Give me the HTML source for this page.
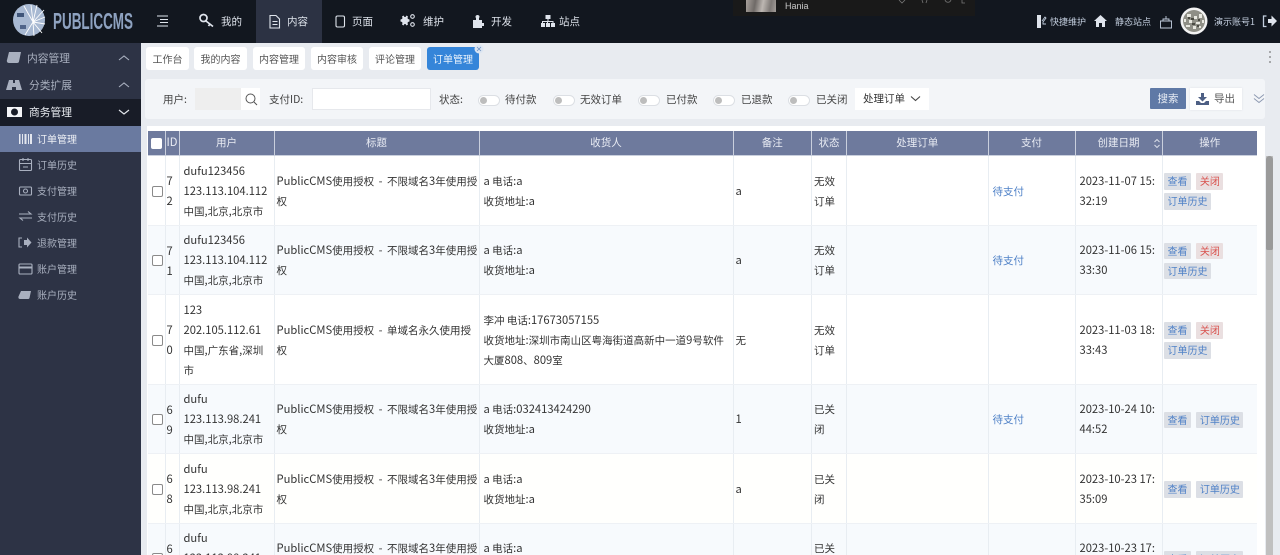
<!DOCTYPE html>
<html lang="zh"><head><meta charset="utf-8"><title>PublicCMS</title>
<style>
*{box-sizing:border-box}
html,body{margin:0;padding:0;width:1280px;height:555px;overflow:hidden;background:#e8ebf0}
body{position:relative;font-family:"Liberation Sans","Noto Sans CJK SC",sans-serif;font-size:10.5px;color:#333}
.t,.a{position:absolute;white-space:nowrap}
.t{line-height:20px;font-family:"Noto Sans CJK SC","Liberation Sans",sans-serif}
svg{position:absolute;overflow:visible}
#top{position:absolute;left:0;top:0;width:1280px;height:43px;background:#12171f}
#side{position:absolute;left:0;top:43px;width:141px;height:512px;background:#2d3345}
.nv{color:#dde2ea;font-size:10.5px}
.rt{color:#c3cede;font-size:9px}
.sd{color:#a9b0bf;font-size:10px}
.sh{color:#a9b0bf;font-size:10.75px}
.tab{position:absolute;top:47px;height:23px;line-height:23px;background:#fff;border-radius:3px;text-align:center;color:#555;font-size:10px;font-family:"Noto Sans CJK SC",sans-serif}
.lb{font-size:10.5px;color:#444}
.tg{position:absolute;top:95px;width:22px;height:11px;background:#fff;border:1px solid #dcdfe4;border-radius:6px}
.tg:before{content:"";position:absolute;left:1px;top:1px;width:7px;height:7px;border-radius:50%;background:#bdbdbd}
#wrap{position:absolute;left:148px;top:131px;width:1109px;height:424px;overflow:hidden}
table{position:absolute;left:0;top:0;width:1109px;border-collapse:collapse;table-layout:fixed;font-family:"Noto Sans CJK SC","Liberation Sans",sans-serif;font-size:10.5px;color:#333;line-height:20px}
th{height:24.5px;background:#6e7a9d;color:#e8ebf3;font-weight:400;padding:0;border-right:1px solid #c9cfdd;border-bottom:1px solid #c9cfdd;line-height:24px;overflow:hidden}
th:last-child,td:last-child{border-right:0}
td{padding:3px 4px 0;border-right:1px solid #e8edf2;border-bottom:1px solid #eef1f5;overflow:hidden;vertical-align:middle;word-break:break-all;background:#fff}
tr.o td{background:#f7fafd}
tr.w td{background:#fffffd}
i{font-style:normal;font-size:11.2px;line-height:1}
i.h{margin:0 4.5px}
.cb{display:block;width:11px;height:11px;border:1px solid #8a8a8a;border-radius:2px;background:#fff;margin:0 auto}
.b{display:inline-block;height:16.5px;line-height:16px;padding:0 3.5px;background:#dcdfe5;color:#4f81c7;border-radius:1px;font-size:10px;margin:1.75px 3px 1.75px 0;vertical-align:middle}
.r{color:#d9534f;background:#eadfe0}
.p{color:#4f81c7}
td.op{padding:2px 0 0 1.5px;line-height:20px}
td.c{padding:2px 0 0 1.500px}
td.n{padding:4px 0 0 1px}
</style></head>
<body>
<div id="top"></div>
<div class="a" style="left:256px;top:0;width:66px;height:43px;background:#2c3243"></div>
<div class="a" style="left:733px;top:0;width:242px;height:16px;background:#191919"></div>
<div class="a" style="left:746px;top:0;width:30px;height:12px;background:linear-gradient(100deg,#a8a19c,#6f6a67 30%,#bdb7b2 55%,#7d7875 80%,#a39d99)"></div>
<div class="t" style="left:785px;top:-4px;color:#c9c9c9;font-size:9px;font-family:'Liberation Sans',sans-serif">Hania</div>
<svg style="left:0;top:0" width="1280" height="43" fill="none">
 <circle cx="29" cy="20" r="16" fill="#a8b9d2"/>
 <g stroke="#fff" stroke-width=".9">
  <path d="M33 22L44 10M33 22L45 17M33 22L45 24M33 22L42 33M33 22L34 36M33 22L25 35M33 22L31 5M33 22L37 5M33 22L24 6"/>
 </g>
 <rect x="17" y="13" width="7" height="4" fill="#3f5579"/><rect x="20" y="25" width="6" height="4" fill="#4f6489"/>
 <g stroke="#dfe4ec" stroke-width="1.1">
  <path d="M157 16h11M160 19.500h8M160 22.500h8M157 26h11"/>
  <path d="M270 15.500h6l3.500 3.500v9h-9.500zM272.500 21.500h5M272.500 24.500h5"/>
  <rect x="336" y="16" width="8.500" height="11" rx="1.500"/>
  <circle cx="412.500" cy="16.500" r="1.800"/><circle cx="412.500" cy="24.500" r="1.800"/>
 </g>
 <g stroke="#dfe4ec" stroke-width="1.700">
  <circle cx="203.500" cy="18" r="3.500"/><path d="M206 21l7 5.500M210 24l-1.500 2"/>
 </g>
 <g fill="#dfe4ec">
  <path d="M405 17l1.500-1 1 1.500h1l1-1.500 1.500 1-.5 1.500.5 1 1.500.5v2l-1.500.5-.5 1 .5 1.500-1.500 1-1-1.500h-1l-1 1.500-1.500-1 .5-1.500-.5-1-1.500-.5v-2l1.500-.5.5-1z" transform="translate(-3 -.5)"/>
  <path d="M473 20h3v-2c-1-1-.5-3 1.500-3s2.500 2 1.500 3v2h3v3h2v3h-2v2h-9z"/>
  <rect x="545.500" y="15" width="5" height="4"/><rect x="541" y="23" width="4" height="4"/><rect x="546" y="23" width="4" height="4"/><rect x="551" y="23" width="4" height="4"/>
  <path d="M547.500 19h1v2h5v2h-1v-1h-4.500v1h-1v-1H543v1h-1v-2h5.500z"/>
  <path d="M1037 15h4v13h-4z"/>
  <path d="M1094 21l6.500-6 6.500 6h-2v6h-3v-4h-3v4h-3v-6z"/>
  <path d="M1268 18h3.500v-3.500l5.500 5.500-5.500 5.500V22h-3.500z" transform="translate(0 1)"/>
 </g>
 <g stroke="#c3cede" stroke-width=".9">
  <path d="M1042 21l3-4 1 1-3 4v2h3"/>
  <path d="M1160.500 21h11v7h-11zM1163 21v-2h6v2M1166 16v3"/>
  <path d="M1266.500 16h-3v10.500h3" stroke-width="1.300"/>
 </g>
 <circle cx="1194" cy="21" r="13.500" fill="#f3f3f3"/>
 <circle cx="1194" cy="21" r="11" fill="#8f8f86"/>
 <g fill="#e8e8e0"><rect x="1187" y="14" width="4" height="3"/><rect x="1194" y="16" width="3" height="3"/><rect x="1199" y="14" width="3" height="4"/><rect x="1189" y="20" width="3" height="3"/><rect x="1196" y="22" width="4" height="2"/><rect x="1186" y="25" width="4" height="2"/><rect x="1193" y="26" width="3" height="3"/><rect x="1199" y="26" width="2" height="2"/><rect x="1184" y="19" width="2" height="3"/><rect x="1202" y="20" width="2" height="3"/></g>
 <g fill="#4a4a42"><rect x="1191" y="18" width="3" height="2"/><rect x="1198" y="19" width="2" height="2"/><rect x="1192" y="23" width="3" height="2"/><rect x="1188" y="17" width="2" height="2"/><rect x="1197" y="25" width="2" height="2"/></g>
 <g stroke="#777" stroke-width=".8"><path d="M899 0l3 3 3-3M922 0l1 3M927 0l-1 3M945 0c1 3 5 3 6 0M962 0v3h3"/></g>
</svg>
<svg style="left:0;top:0" width="140" height="43"><text x="53" y="29" textLength="80" lengthAdjust="spacingAndGlyphs" fill="#8ea2c0" font-family="'Liberation Sans',sans-serif" font-weight="700" font-size="23">PUBLICCMS</text></svg>
<div class="t nv" style="left:221px;top:12px">我的</div>
<div class="t nv" style="left:287px;top:12px">内容</div>
<div class="t nv" style="left:352px;top:12px">页面</div>
<div class="t nv" style="left:423px;top:12px">维护</div>
<div class="t nv" style="left:491px;top:12px">开发</div>
<div class="t nv" style="left:559px;top:12px">站点</div>
<div class="t rt" style="left:1050px;top:12px">快捷维护</div>
<div class="t rt" style="left:1115px;top:12px">静态站点</div>
<div class="t rt" style="left:1214px;top:12px">演示账号1</div>

<div id="side"></div>
<div class="a" style="left:0;top:99px;width:141px;height:27px;background:#181c27"></div>
<div class="a" style="left:0;top:126px;width:141px;height:26px;background:#6a7aa0"></div>
<svg style="left:0;top:43px" width="141" height="270" fill="none">
 <g fill="#a9b0bf">
  <path d="M9 9h12l-2 9.500c0 1-1 1.500-2 1.500H9c-2 0-2.500-2-2-3z"/>
  <path d="M9 37h4v3h2v-3h4l3 10h-6v-3h-4v3H6z"/>
 </g>
 <g stroke="#a9b0bf" stroke-width="1.100">
  <path d="M119 17l5-4 5 4M119 44l5-4 5 4"/>
  <rect x="19.500" y="116.500" width="12" height="11" rx="1"/>
  <path d="M19.500 120.500h12M23 115v3M28 115v3M23 124h5"/>
  <rect x="19.500" y="144" width="12" height="8" rx="1"/><circle cx="25.500" cy="148" r="2"/>
  <path d="M19 171h12l-3-2.500M32 175H20l3 2.500" />
  <path d="M22 195h-3v9h3"/>
  <rect x="19" y="221" width="13" height="10" rx="1"/><path d="M19 224.500h13" stroke-width="2"/>
 </g>
 <path d="M119 67l5 4 5-4" stroke="#e3e6ec" stroke-width="1.200"/>
 <rect x="7" y="64" width="15" height="10" fill="#f4f5f7"/><circle cx="14.500" cy="69" r="3.500" fill="#181c27"/>
 <path d="M19 91h1.500v10H19zM22 91h1v10h-1zM24.500 91h2v10h-2zM28 91h1v10h-1zM30 91h2v10h-2z" fill="#e3e6ee"/>
 <path d="M24 197h3v-2.500l4.500 5-4.500 5V202h-3z" fill="#a9b0bf"/>
 <path d="M21 248h10l-1.500 7c-.2.800-.8 1-1.500 1h-8c-1.500 0-1.800-1.500-1.500-2.500z" fill="#a9b0bf"/>
</svg>
<div class="t sh" style="left:27px;top:49px">内容管理</div>
<div class="t sh" style="left:29px;top:76px">分类扩展</div>
<div class="t sh" style="left:29px;top:103px;color:#e8ebf0">商务管理</div>
<div class="t" style="left:37px;top:129px;color:#eef0f5;font-size:10px">订单管理</div>
<div class="t sd" style="left:37px;top:155px">订单历史</div>
<div class="t sd" style="left:37px;top:181px">支付管理</div>
<div class="t sd" style="left:37px;top:207px">支付历史</div>
<div class="t sd" style="left:37px;top:233px">退款管理</div>
<div class="t sd" style="left:37px;top:259px">账户管理</div>
<div class="t sd" style="left:37px;top:285px">账户历史</div>

<div class="tab" style="left:146px;width:43px">工作台</div>
<div class="tab" style="left:194px;width:53px">我的内容</div>
<div class="tab" style="left:253px;width:52px">内容管理</div>
<div class="tab" style="left:311px;width:52px">内容审核</div>
<div class="tab" style="left:369px;width:52px">评论管理</div>
<div class="tab" style="left:427px;width:52px;background:#3585d9;color:#eaf3fc">订单管理</div>
<svg style="left:474px;top:44px" width="10" height="10"><circle cx="5" cy="5" r="4.500" fill="#dbe5f2"/><path d="M3 3l4 4M7 3l-4 4" stroke="#6d8fbe" stroke-width=".8"/></svg>
<svg style="left:1268px;top:50px" width="4" height="14"><circle cx="2" cy="2" r=".9" fill="#777"/><circle cx="2" cy="7" r=".9" fill="#777"/><circle cx="2" cy="12" r=".9" fill="#777"/></svg>

<div class="a" style="left:145px;top:79px;width:1120px;height:40px;background:#f3f5f8;border-radius:3px"></div>
<div class="t lb" style="left:163px;top:90px">用户:</div>
<div class="a" style="left:195px;top:88px;width:46px;height:22px;background:#eeeeee"></div>
<div class="a" style="left:241px;top:88px;width:19px;height:22px;background:#fff"></div>
<svg style="left:241px;top:88px" width="19" height="22" fill="none" stroke="#555" stroke-width="1"><circle cx="9.500" cy="10.500" r="4.500"/><path d="M13 14l3 3"/></svg>
<div class="t lb" style="left:269px;top:90px">支付ID:</div>
<div class="a" style="left:312px;top:88px;width:119px;height:22px;background:#fff;border:1px solid #e6e8ec"></div>
<div class="t lb" style="left:439px;top:90px">状态:</div>
<div class="tg" style="left:477.500px"></div><div class="t lb" style="left:505px;top:90px">待付款</div>
<div class="tg" style="left:552.500px"></div><div class="t lb" style="left:580px;top:90px">无效订单</div>
<div class="tg" style="left:638px"></div><div class="t lb" style="left:666px;top:90px">已付款</div>
<div class="tg" style="left:713px"></div><div class="t lb" style="left:741px;top:90px">已退款</div>
<div class="tg" style="left:788px"></div><div class="t lb" style="left:816px;top:90px">已关闭</div>
<div class="a" style="left:855px;top:88px;width:74px;height:22px;background:#fff"></div>
<div class="t lb" style="left:863px;top:89px;color:#333">处理订单</div>
<svg style="left:910px;top:95px" width="12" height="8" fill="none" stroke="#444" stroke-width="1.100"><path d="M1 1.500l4.500 4 4.500-4"/></svg>
<div class="a" style="left:1150px;top:88px;width:36px;height:21px;background:#5f79a6;border-radius:1px;color:#e8edf5;text-align:center;line-height:21px;font-family:'Noto Sans CJK SC',sans-serif;font-size:10.5px">搜索</div>
<div class="a" style="left:1190px;top:88px;width:52px;height:22px;background:#fff;box-shadow:0 0 2px #dcdfe4"></div>
<svg style="left:1196px;top:92px" width="14" height="14" fill="#4d5f84"><path d="M5 1h3v4h3L6.500 9.500 2 5h3zM0 9h3l2 2h3l2-2h3v4H0z"/></svg>
<div class="t lb" style="left:1214px;top:89px;color:#555">导出</div>
<svg style="left:1253px;top:93px" width="12" height="12" fill="none" stroke="#8e9ab2" stroke-width="1"><path d="M1 1.500l5 4 5-4M1 5.500l5 4 5-4"/></svg>

<div class="a" style="left:147px;top:126px;width:1118px;height:429px;background:#fff"></div>
<div class="a" style="left:1265.500px;top:156px;width:7.500px;height:399px;background:#c0c0c0"></div>
<div class="a" style="left:1265.500px;top:156px;width:7.500px;height:94px;background:#9a9a9a;border-radius:4px 4px 2px 2px"></div>

<div id="wrap">
<table>
<colgroup><col style="width:17px"><col style="width:14px"><col style="width:95px"><col style="width:205px"><col style="width:254px"><col style="width:78.500px"><col style="width:35px"><col style="width:141.500px"><col style="width:87px"><col style="width:87px"><col style="width:95px"></colgroup>
<tr>
<th><span class="cb" style="border:0"></span></th><th><i>ID</i></th><th>用户</th><th>标题</th><th>收货人</th><th>备注</th><th>状态</th><th>处理订单</th><th>支付</th><th>创建日期</th><th>操作</th>
</tr>
<tr style="height:69.500px">
<td class="c"><span class="cb"></span></td><td class="n"><i>7<br>2</i></td>
<td><i>dufu123456<br>123.113.104.112</i><br>中国<i>,</i>北京<i>,</i>北京市</td>
<td style="padding:3px 0 0 2px"><i>PublicCMS</i>使用授权<i class="h">-</i>不限域名<i>3</i>年使用授<br>权</td>
<td><i>a</i> 电话<i>:a</i><br>收货地址<i>:a</i></td><td style="padding-left:2px"><i>a</i></td><td style="padding-left:2px">无效<br>订单</td><td></td>
<td class="p">待支付</td><td><i>2023-11-07 15:<br>32:19</i></td>
<td class="op"><span class="b">查看</span> <span class="b r">关闭</span><br><span class="b">订单历史</span></td>
</tr>
<tr class="o" style="height:69.500px">
<td class="c"><span class="cb"></span></td><td class="n"><i>7<br>1</i></td>
<td><i>dufu123456<br>123.113.104.112</i><br>中国<i>,</i>北京<i>,</i>北京市</td>
<td style="padding:3px 0 0 2px"><i>PublicCMS</i>使用授权<i class="h">-</i>不限域名<i>3</i>年使用授<br>权</td>
<td><i>a</i> 电话<i>:a</i><br>收货地址<i>:a</i></td><td style="padding-left:2px"><i>a</i></td><td style="padding-left:2px">无效<br>订单</td><td></td>
<td class="p">待支付</td><td><i>2023-11-06 15:<br>33:30</i></td>
<td class="op"><span class="b">查看</span> <span class="b r">关闭</span><br><span class="b">订单历史</span></td>
</tr>
<tr style="height:89.500px">
<td class="c"><span class="cb"></span></td><td class="n"><i>7<br>0</i></td>
<td><i>123<br>202.105.112.61</i><br>中国<i>,</i>广东省<i>,</i>深圳<br>市</td>
<td style="padding:3px 0 0 2px"><i>PublicCMS</i>使用授权<i class="h">-</i>单域名永久使用授<br>权</td>
<td>李冲 电话<i>:17673057155</i><br>收货地址<i>:</i>深圳市南山区粤海街道高新中一道<i>9</i>号软件<br>大厦<i>808</i>、<i>809</i>室</td><td style="padding-left:2px">无</td><td style="padding-left:2px">无效<br>订单</td><td></td>
<td></td><td><i>2023-11-03 18:<br>33:43</i></td>
<td class="op"><span class="b">查看</span> <span class="b r">关闭</span><br><span class="b">订单历史</span></td>
</tr>
<tr class="o" style="height:69.500px">
<td class="c"><span class="cb"></span></td><td class="n"><i>6<br>9</i></td>
<td><i>dufu<br>123.113.98.241</i><br>中国<i>,</i>北京<i>,</i>北京市</td>
<td style="padding:3px 0 0 2px"><i>PublicCMS</i>使用授权<i class="h">-</i>不限域名<i>3</i>年使用授<br>权</td>
<td><i>a</i> 电话<i>:032413424290</i><br>收货地址<i>:a</i></td><td style="padding-left:2px"><i>1</i></td><td style="padding-left:2px">已关<br>闭</td><td></td>
<td class="p">待支付</td><td><i>2023-10-24 10:<br>44:52</i></td>
<td class="op"><span class="b">查看</span> <span class="b">订单历史</span></td>
</tr>
<tr class="w" style="height:69.500px">
<td class="c"><span class="cb"></span></td><td class="n"><i>6<br>8</i></td>
<td><i>dufu<br>123.113.98.241</i><br>中国<i>,</i>北京<i>,</i>北京市</td>
<td style="padding:3px 0 0 2px"><i>PublicCMS</i>使用授权<i class="h">-</i>不限域名<i>3</i>年使用授<br>权</td>
<td><i>a</i> 电话<i>:a</i><br>收货地址<i>:a</i></td><td style="padding-left:2px"><i>a</i></td><td style="padding-left:2px">已关<br>闭</td><td></td>
<td></td><td><i>2023-10-23 17:<br>35:09</i></td>
<td class="op"><span class="b">查看</span> <span class="b">订单历史</span></td>
</tr>
<tr class="o" style="height:69.500px">
<td class="c"><span class="cb"></span></td><td class="n"><i>6<br>7</i></td>
<td><i>dufu<br>123.113.98.241</i><br>中国<i>,</i>北京<i>,</i>北京市</td>
<td style="padding:3px 0 0 2px"><i>PublicCMS</i>使用授权<i class="h">-</i>不限域名<i>3</i>年使用授<br>权</td>
<td><i>a</i> 电话<i>:a</i><br>收货地址<i>:a</i></td><td style="padding-left:2px"><i>a</i></td><td style="padding-left:2px">已关<br>闭</td><td></td>
<td></td><td><i>2023-10-23 17:<br>33:20</i></td>
<td class="op"><span class="b">查看</span> <span class="b">订单历史</span></td>
</tr>
</table>
</div>
<svg style="left:1153px;top:138px" width="8" height="11" fill="none" stroke="#dfe3ec" stroke-width=".9"><path d="M1.500 4l2.500-2.500L6.500 4M1.500 7L4 9.500 6.500 7"/></svg>
</body></html>
